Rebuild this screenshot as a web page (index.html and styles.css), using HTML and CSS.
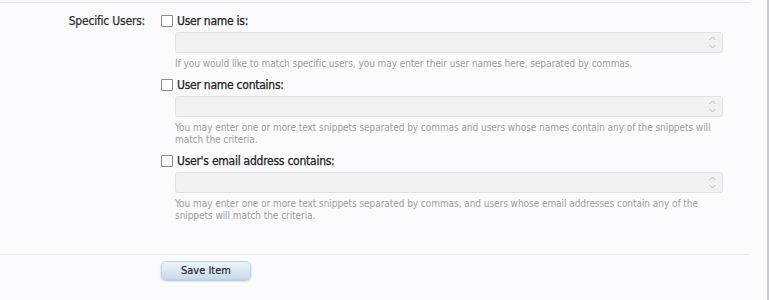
FILE: index.html
```html
<!DOCTYPE html>
<html lang="en">
<head>
    <meta charset="UTF-8">
    <title>Criteria - Specific Users</title>
    <link rel="stylesheet" href="styles.css">
</head>
<body>
    <div class="page">
        <form class="criteria-form">
            <div class="section">
                <dl class="ctrl-unit">
                    <dt class="ctrl-label">Specific Users:</dt>
                    <dd class="ctrl-body">
                        <label class="check-row">
                            <span class="checkbox"></span>
                            <span class="check-title">User name is:</span>
                        </label>
                        <div class="textbox">
                            <svg class="spin" width="9" height="15" viewBox="0 0 9 15"><path d="M1.5 5 L4.5 2 L7.5 5 M1.5 10 L4.5 13 L7.5 10" fill="none" stroke="#b8b8b8" stroke-width="1"/></svg>
                        </div>
                        <p class="hint">If you would like to match specific users, you may enter their user names here, separated by commas.</p>

                        <label class="check-row">
                            <span class="checkbox"></span>
                            <span class="check-title">User name contains:</span>
                        </label>
                        <div class="textbox">
                            <svg class="spin" width="9" height="15" viewBox="0 0 9 15"><path d="M1.5 5 L4.5 2 L7.5 5 M1.5 10 L4.5 13 L7.5 10" fill="none" stroke="#b8b8b8" stroke-width="1"/></svg>
                        </div>
                        <p class="hint">You may enter one or more text snippets separated by commas and users whose names contain any of the snippets will match the criteria.</p>

                        <label class="check-row">
                            <span class="checkbox"></span>
                            <span class="check-title">User's email address contains:</span>
                        </label>
                        <div class="textbox">
                            <svg class="spin" width="9" height="15" viewBox="0 0 9 15"><path d="M1.5 5 L4.5 2 L7.5 5 M1.5 10 L4.5 13 L7.5 10" fill="none" stroke="#b8b8b8" stroke-width="1"/></svg>
                        </div>
                        <p class="hint">You may enter one or more text snippets separated by commas, and users whose email addresses contain any of the snippets will match the criteria.</p>
                    </dd>
                </dl>
            </div>
            <div class="submit-unit">
                <button type="button" class="button">Save Item</button>
            </div>
        </form>
    </div>
</body>
</html>
```

FILE: styles.css
```css
body { margin: 0; font-family: "DejaVu Sans Condensed", "DejaVu Sans", sans-serif; color: #222; }
.page { width: 767px; height: 300px; background: #fbfbfd; border-right: 2px solid #c9c9d1; overflow: hidden; }
.criteria-form { margin-right: 18px; padding-top: 2px; }
.section { border-top: 1px solid #dde8ee; height: 251px; }
.ctrl-unit { display: flex; margin: 10px 0 0 0; }
.ctrl-label { width: 145px; text-align: right; font-size: 12px; line-height: 16px; letter-spacing: -0.2px; color: #2a2a2a; -webkit-text-stroke: 0.2px #2a2a2a; }
.ctrl-body { margin: 0 0 0 16px; width: 562px; }
.check-row { display: flex; align-items: center; gap: 4px; height: 16px; font-size: 12px; }
.checkbox { width: 10px; height: 10px; border: 1px solid #8a8a8a; border-radius: 1px; background: #fff; }
.check-title { color: #222; letter-spacing: -0.25px; -webkit-text-stroke: 0.25px #222; }
.textbox { position: relative; margin: 3px 0 0 14px; height: 19px; width: 546px; background: #f2f2f2; border: 1px solid #e1e1e1; border-radius: 3px; }
.spin { position: absolute; right: 5px; top: 2px; }
.hint { margin: 5px 0 7px 14px; width: 550px; font-size: 10px; line-height: 12px; letter-spacing: -0.06px; color: #9c9c9c; }
.submit-unit { border-top: 1px solid #e4ebee; padding: 6px 0 0 161px; }
.button { display: block; margin: 0; width: 90px; height: 19px; font-family: inherit; font-size: 11px; color: #222; border: 1px solid #c2d3e2; border-radius: 5px; background: linear-gradient(#eef5fa, #c6daeb); box-shadow: 0 1px 2px rgba(70, 95, 130, 0.4); padding: 0; -webkit-text-stroke: 0.15px #222; }
```
